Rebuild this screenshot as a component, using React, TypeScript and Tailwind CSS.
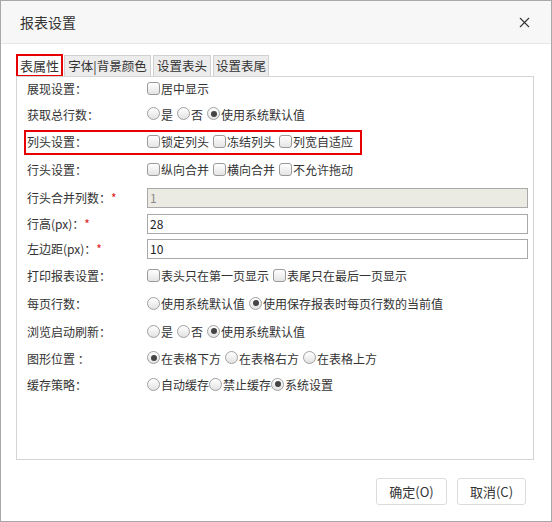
import { X } from 'lucide-react';

const font = { fontFamily: '"Noto Sans CJK SC", "Liberation Sans", sans-serif' };

function Check({ label, checked = false }: { label: string; checked?: boolean }) {
  return (
    <label className="flex items-center mr-[4px] whitespace-nowrap">
      <span className="w-[13px] h-[13px] rounded-[3px] border border-[#9a9a9a] bg-gradient-to-b from-white to-[#e4e4e4] flex items-center justify-center mr-px -mt-[2px]">
        {checked && <span className="w-[7px] h-[7px] bg-[#444]" />}
      </span>
      <span>{label}</span>
    </label>
  );
}

function Radio({ label, checked = false, tight = false }: { label: string; checked?: boolean; tight?: boolean }) {
  return (
    <label className={'flex items-center whitespace-nowrap ' + (tight ? 'mr-0' : 'mr-[4px]')}>
      <span className="w-[13px] h-[13px] rounded-full border border-[#a0a0a0] bg-gradient-to-b from-white to-[#e2e2e2] flex items-center justify-center mr-px -mt-[2px]">
        {checked && <span className="w-[6px] h-[6px] rounded-full bg-[#444]" />}
      </span>
      <span>{label}</span>
    </label>
  );
}

function Row({
  label,
  required = false,
  h,
  children,
}: {
  label: string;
  required?: boolean;
  h: string;
  children: React.ReactNode;
}) {
  return (
    <div className={'flex items-center ' + h}>
      <div className="w-[130px] pl-[10px] shrink-0 whitespace-nowrap">
        {label}
        {required && <span className="text-[#e02020]">*</span>}
      </div>
      <div className="flex items-center flex-1 pr-[5px]">{children}</div>
    </div>
  );
}

function TextInput({ value, disabled = false }: { value: string; disabled?: boolean }) {
  return (
    <div
      className={
        'w-full h-[20px] border border-[#a9a9a9] px-[2px] flex items-center text-[12px] ' +
        (disabled ? 'bg-[#ebebe4] text-[#8a8a8a]' : 'bg-white text-[#222]')
      }
    >
      {value}
    </div>
  );
}

export default function App() {
  const tabs = [
    { name: '字体|背景颜色', w: 'w-[87px] ml-px' },
    { name: '设置表头', w: 'w-[58px] ml-[2px]' },
    { name: '设置表尾', w: 'w-[56px] ml-[2px]' },
  ];

  return (
    <div style={font} className="w-[552px] h-[522px] border border-[#a8a8a8] bg-white flex flex-col text-[12px] text-[#333]">
      {/* Header */}
      <div className="h-[43px] shrink-0 bg-[#f7f7f7] border-b border-[#e6e6e6] flex items-center justify-between pl-[19px] pr-[18px]">
        <span className="text-[14px] text-[#333]">报表设置</span>
        <X size={17} strokeWidth={1.5} className="text-[#333]" />
      </div>

      {/* Tabs */}
      <div className="flex items-end h-[33px] pl-[15px] shrink-0">
        <div className="w-[47px] h-[23px] border-2 border-[#e60000] bg-white flex items-center justify-center text-[13px] text-[#333]">
          表属性
        </div>
        {tabs.map((t) => (
          <div
            key={t.name}
            className={
              t.w +
              ' h-[22px] border border-b-0 border-[#d0d0d0] bg-[#ececec] flex items-center justify-center text-[12.5px] text-[#333] whitespace-nowrap'
            }
          >
            {t.name}
          </div>
        ))}
      </div>

      {/* Panel */}
      <div className="ml-[15px] mr-[17px] h-[384px] border border-[#d4d4d4] -mt-px flex flex-col">
        <Row label="展现设置：" h="h-[24px]">
          <Check label="居中显示" />
        </Row>
        <Row label="获取总行数：" h="h-[27px]">
          <Radio label="是" />
          <Radio label="否" />
          <Radio label="使用系统默认值" checked />
        </Row>
        <div className="relative">
          <Row label="列头设置：" h="h-[28px]">
            <Check label="锁定列头" />
            <Check label="冻结列头" />
            <Check label="列宽自适应" />
          </Row>
          <span className="absolute left-[7px] top-[2px] w-[338px] h-[25px] border-2 border-[#e60000] pointer-events-none" />
        </div>
        <Row label="行头设置：" h="h-[28px]">
          <Check label="纵向合并" />
          <Check label="横向合并" />
          <Check label="不允许拖动" />
        </Row>
        <Row label="行头合并列数：" required h="h-[27px]">
          <TextInput value="1" disabled />
        </Row>
        <Row label="行高(px)：" required h="h-[25px]">
          <TextInput value="28" />
        </Row>
        <Row label="左边距(px)：" required h="h-[26px]">
          <TextInput value="10" />
        </Row>
        <Row label="打印报表设置：" h="h-[28px]">
          <Check label="表头只在第一页显示" />
          <Check label="表尾只在最后一页显示" />
        </Row>
        <Row label="每页行数：" h="h-[28px]">
          <Radio label="使用系统默认值" />
          <Radio label="使用保存报表时每页行数的当前值" checked />
        </Row>
        <Row label="浏览启动刷新：" h="h-[28px]">
          <Radio label="是" />
          <Radio label="否" />
          <Radio label="使用系统默认值" checked />
        </Row>
        <Row label="图形位置 ：" h="h-[25px]">
          <Radio label="在表格下方" checked />
          <Radio label="在表格右方" />
          <Radio label="在表格上方" />
        </Row>
        <Row label="缓存策略：" h="h-[28px]">
          <Radio label="自动缓存" tight />
          <Radio label="禁止缓存" tight />
          <Radio label="系统设置" checked tight />
        </Row>
      </div>

      {/* Footer */}
      <div className="flex justify-end gap-[10px] pr-[25px] pt-[18px]">
        <button className="w-[71px] h-[27px] border border-[#dcdcdc] rounded-[3px] bg-white text-[13px] text-[#333]">
          确定(O)
        </button>
        <button className="w-[69px] h-[27px] border border-[#dcdcdc] rounded-[3px] bg-white text-[13px] text-[#333]">
          取消(C)
        </button>
      </div>
    </div>
  );
}
